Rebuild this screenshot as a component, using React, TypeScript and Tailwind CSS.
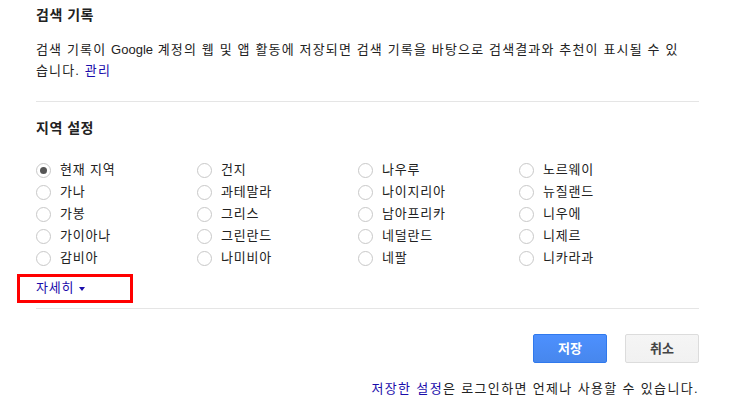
import React from "react";

const countries = [
    ["현재 지역", "건지", "나우루", "노르웨이"],
    ["가나", "과테말라", "나이지리아", "뉴질랜드"],
    ["가봉", "그리스", "남아프리카", "니우에"],
    ["가이아나", "그린란드", "네덜란드", "니제르"],
    ["감비아", "나미비아", "네팔", "니카라과"],
];

function Radio({ label, checked }: { label: string; checked?: boolean }) {
    return (
        <label className="flex h-[22px] items-center gap-[9px]">
            <span className="flex h-[15px] w-[15px] items-center justify-center rounded-full border border-[#c8c8c8] bg-white">
                {checked && <span className="h-[7px] w-[7px] rounded-full bg-[#555]" />}
            </span>
            <span className="tracking-[0.8px]">{label}</span>
        </label>
    );
}

export default function App() {
    const cells = countries.flat();

    return (
        <div
            className="relative h-[397px] w-[740px] bg-white text-[13px] text-[#222]"
            style={{ fontFamily: '"Liberation Sans", "Noto Sans CJK KR", sans-serif' }}
        >
            <div className="ml-[36px] w-[663px] pt-[5px]">
                <h2 className="h-[20px] text-[14px] leading-[20px] font-bold tracking-[0.5px]">검색 기록</h2>

                <p className="mt-[14px] leading-[21px] tracking-[1.15px]">
                    검색 기록이 <span className="tracking-normal">Google</span> 계정의 웹 및 앱 활동에 저장되면 검색 기록을 바탕으로 검색결과와 추천이 표시될 수 있
                    <br />
                    습니다. <a className="text-[#1a0dab]">관리</a>
                </p>

                <div className="mt-[20px] h-px bg-[#e5e5e5]" />

                <h2 className="mt-[16px] h-[20px] text-[14px] leading-[20px] font-bold tracking-[0.5px]">지역 설정</h2>

                <div className="mt-[21px] grid grid-cols-[161px_161px_161px_161px]">
                    {cells.map((c, i) => (
                        <Radio key={c} label={c} checked={i === 0} />
                    ))}
                </div>

                <div className="mt-[9px] flex h-[20px] items-center gap-[5px] text-[#1a0dab]">
                    <span className="tracking-[0.8px]">자세히</span>
                    <span className="mt-[2px] h-0 w-0 border-x-[3.5px] border-t-[4px] border-x-transparent border-t-[#1a0dab]" />
                </div>

                <div className="mt-[10px] h-px bg-[#e5e5e5]" />

                <div className="mt-[25px] flex justify-end gap-[18px]">
                    <button className="h-[29px] w-[74px] rounded-[2px] border border-[#3079ed] bg-gradient-to-b from-[#4d90fe] to-[#4787ed] font-bold text-white">
                        저장
                    </button>
                    <button className="h-[29px] w-[74px] rounded-[2px] border border-[#dcdcdc] bg-gradient-to-b from-[#f5f5f5] to-[#f1f1f1] font-bold text-[#444]">
                        취소
                    </button>
                </div>

                <p className="mt-[16px] text-right leading-[20px] tracking-[1.35px]">
                    <a className="text-[#1a0dab]">저장한 설정</a>은 로그인하면 언제나 사용할 수 있습니다.
                </p>
            </div>

            {/* annotation box */}
            <div className="absolute top-[274px] left-[17px] h-[29px] w-[116px] border-[3px] border-[#ff0000]" />
        </div>
    );
}
